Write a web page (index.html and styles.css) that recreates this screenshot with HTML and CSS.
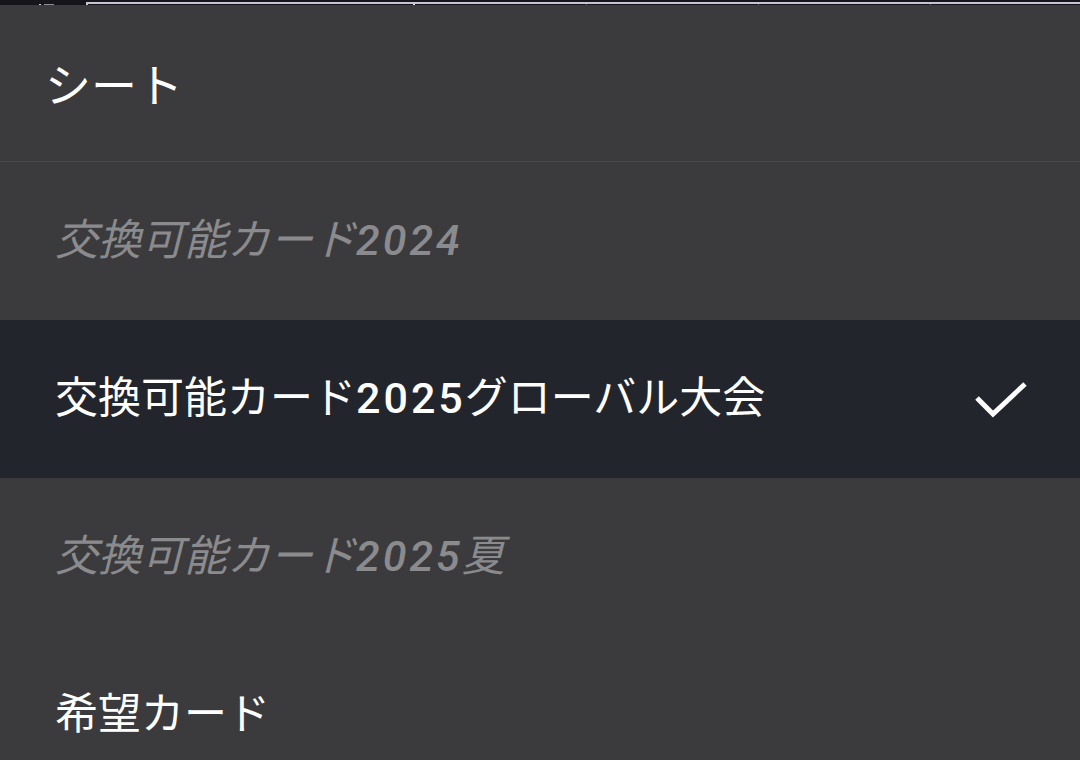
FILE: index.html
```html
<!DOCTYPE html>
<html lang="ja">
<head>
<meta charset="utf-8">
<link rel="stylesheet" href="styles.css">
</head>
<body>
<div class="strip">
  <div class="corner"><span class="mark"></span><span class="mark wide"></span></div>
  <div class="cells">
    <div class="cell c1"></div>
    <div class="cell c2"></div>
    <div class="cell"></div>
    <div class="cell"></div>
    <div class="cell last"></div>
  </div>
</div>
<div class="sheet">
  <div class="title">シート</div>
  <ul class="list">
    <li class="item hidden"><span class="label">交換可能カード<span class="num">2024</span></span></li>
    <li class="item selected">
      <span class="label">交換可能カード<span class="num">2025</span>グローバル大会</span>
      <svg class="check" viewBox="0 0 56 40" width="56" height="40"><path d="M5 19 L21 35 L53 5" fill="none" stroke="#ffffff" stroke-width="5"/></svg>
    </li>
    <li class="item hidden"><span class="label">交換可能カード<span class="num">2025</span>夏</span></li>
    <li class="item"><span class="label">希望カード</span></li>
  </ul>
</div>
</body>
</html>
```
FILE: styles.css
```css
html, body {
  margin: 0;
  padding: 0;
  height: 100%;
  overflow: hidden;
  background: #3b3b3e;
}
body {
  font-family: Roboto, "Noto Sans CJK JP", sans-serif;
  color: #ffffff;
}
.strip {
  display: flex;
  height: 5px;
  background: #16151c;
}
.corner {
  flex: none;
  width: 86px;
  display: flex;
  align-items: flex-end;
  gap: 3px;
  padding-left: 39px;
  box-sizing: border-box;
}
.mark {
  flex: none;
  width: 2px;
  height: 1px;
  background: #cfcfd6;
}
.mark.wide {
  width: 10px;
  background: #8c8c94;
}
.cells {
  flex: 1;
  display: flex;
  margin-top: 2px;
  margin-right: 2px;
  border-top: 2px solid #c8c5d2;
  border-left: 2px solid #c8c5d2;
  border-right: 2px solid #c8c5d2;
}
.cell {
  flex: none;
  width: 172px;
  border-right: 1px solid #5b5a62;
  box-sizing: border-box;
}
.cell.c1 {
  width: 327px;
  border-right: 2px solid #e8e6ee;
}
.cell.last {
  flex: 1;
  border-right: none;
}
.sheet {
  display: flex;
  flex-direction: column;
}
.title {
  height: 157px;
  display: flex;
  align-items: center;
  padding: 0 0 3px 45px;
  box-sizing: border-box;
  font-size: 46px;
  border-bottom: 1px solid #4b4a53;
}
.list {
  list-style: none;
  margin: 0;
  padding: 0;
}
.item {
  height: 158px;
  display: flex;
  align-items: center;
  justify-content: space-between;
  padding: 0 52px 0 55px;
  box-sizing: border-box;
  font-size: 43px;
  line-height: 1.2;
}
.label {
  white-space: nowrap;
  flex-shrink: 0;
}
.item.hidden {
  color: #8b8b8d;
  font-style: italic;
}
.item.selected {
  background: #23252c;
}
.num {
  font-weight: 500;
  letter-spacing: 3px;
  margin-right: -1px;
}
.check {
  display: block;
}
```
